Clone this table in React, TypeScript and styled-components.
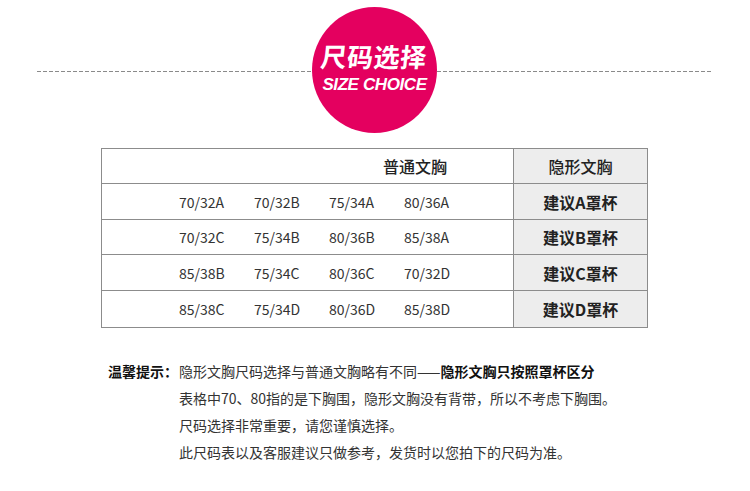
import React from 'react'
import styled, {createGlobalStyle} from 'styled-components'

const GlobalStyle = createGlobalStyle`
    body {
        margin: 0;
        background: #fff;
        font-family: "Noto Sans CJK SC", "Noto Sans", sans-serif;
        color: #333;
    }
`

const Page = styled.div`
    width: 750px;
    height: 491px;
    overflow: hidden;
`

const Banner = styled.div`
    display: flex;
    align-items: center;
    padding: 7px 38px 0 37px;
`

const Dashes = styled.div`
    flex: 1;
    height: 1px;
    margin-top: 2px;
    background: repeating-linear-gradient(to right, #8a8a8a 0 4px, transparent 4px 6px);
`

const Badge = styled.div`
    width: 125px;
    height: 126px;
    border-radius: 50%;
    background: #e4005f;
    color: #fff;
    display: flex;
    flex-direction: column;
    align-items: center;
    justify-content: center;
`

const BadgeTitle = styled.div`
    font-size: 26px;
    font-weight: 700;
    line-height: 30px;
    letter-spacing: 0.5px;
    transform: skewX(-6deg);
`

const BadgeSub = styled.div`
    font-family: "Liberation Sans", Arial, sans-serif;
    font-style: italic;
    font-weight: 700;
    font-size: 17px;
    letter-spacing: -0.4px;
    line-height: 22px;
    margin-top: 3px;
    margin-bottom: 4px;
`

const SizeTable = styled.table`
    width: 547px;
    margin: 15px 0 0 101px;
    border-collapse: collapse;
    table-layout: fixed;

    td {
        border: 1px solid #8c8c8c;
        padding: 0;
    }
`

const Row = styled.tr<{h: number}>`
    height: ${p => p.h}px;
`

const NormalHead = styled.td`
    padding-left: 281px !important;
    font-size: 16px;
    font-weight: 500;
    color: #222;
`

const SideCell = styled.td<{bold?: boolean}>`
    width: 133px;
    background: #ededed;
    text-align: center;
    font-size: 16px;
    font-weight: ${p => (p.bold ? 700 : 500)};
    color: #222;
`

const SizeList = styled.div`
    display: grid;
    grid-template-columns: repeat(4, 75px);
    padding-left: 77px;
    font-size: 14px;
    color: #333;
`

const Notes = styled.div`
    display: flex;
    margin: 30px 0 0 108px;
    font-size: 14px;
    line-height: 27px;
    color: #333;
`

const NoteLabel = styled.div`
    font-weight: 700;
    color: #111;
    white-space: nowrap;
`

const NoteLines = styled.div`
    display: flex;
    flex-direction: column;
    margin-left: 1px;
`

const Strong = styled.b`
    font-weight: 700;
    color: #111;
`

const rows = [
    {sizes: ['70/32A', '70/32B', '75/34A', '80/36A'], cup: '建议A罩杯', h: 36},
    {sizes: ['70/32C', '75/34B', '80/36B', '85/38A'], cup: '建议B罩杯', h: 35},
    {sizes: ['85/38B', '75/34C', '80/36C', '70/32D'], cup: '建议C罩杯', h: 36},
    {sizes: ['85/38C', '75/34D', '80/36D', '85/38D'], cup: '建议D罩杯', h: 37},
]

const App = () => {
    return (
        <Page>
            <GlobalStyle/>
            <Banner>
                <Dashes/>
                <Badge>
                    <BadgeTitle>尺码选择</BadgeTitle>
                    <BadgeSub>SIZE CHOICE</BadgeSub>
                </Badge>
                <Dashes/>
            </Banner>
            <SizeTable>
                <tbody>
                    <Row h={35}>
                        <NormalHead>普通文胸</NormalHead>
                        <SideCell>隐形文胸</SideCell>
                    </Row>
                    {rows.map(r => (
                        <Row h={r.h} key={r.cup}>
                            <td>
                                <SizeList>
                                    {r.sizes.map(s => <span key={s}>{s}</span>)}
                                </SizeList>
                            </td>
                            <SideCell bold>{r.cup}</SideCell>
                        </Row>
                    ))}
                </tbody>
            </SizeTable>
            <Notes>
                <NoteLabel>温馨提示：</NoteLabel>
                <NoteLines>
                    <span>隐形文胸尺码选择与普通文胸略有不同——<Strong>隐形文胸只按照罩杯区分</Strong></span>
                    <span>表格中70、80指的是下胸围，隐形文胸没有背带，所以不考虑下胸围。</span>
                    <span>尺码选择非常重要，请您谨慎选择。</span>
                    <span>此尺码表以及客服建议只做参考，发货时以您拍下的尺码为准。</span>
                </NoteLines>
            </Notes>
        </Page>
    )
}

export default App
